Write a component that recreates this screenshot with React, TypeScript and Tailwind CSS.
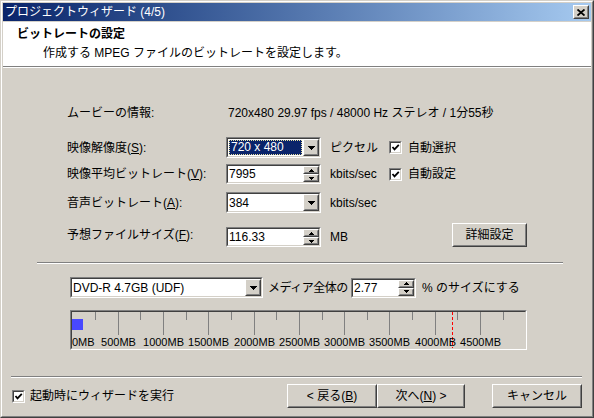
import React from 'react'

type Kids = { className?: string; children?: React.ReactNode }

// classic 3D borders
function Sunken({ className = '', inner = 'bg-white', children }: Kids & { inner?: string }) {
  return (
    <div className={`border border-t-[#808080] border-l-[#808080] border-b-white border-r-white ${className}`}>
      <div className={`h-full w-full border border-t-[#404040] border-l-[#404040] border-b-[#d4d0c8] border-r-[#d4d0c8] ${inner}`}>
        {children}
      </div>
    </div>
  )
}

function Raised({ className = '', children }: Kids) {
  return (
    <div className={`border border-t-white border-l-white border-b-[#404040] border-r-[#404040] bg-[#d4d0c8] ${className}`}>
      <div className="h-full w-full border border-t-[#d4d0c8] border-l-[#d4d0c8] border-b-[#808080] border-r-[#808080] flex items-center justify-center">
        {children}
      </div>
    </div>
  )
}

function Down({ w = 7 }: { w?: number }) {
  const h = Math.ceil(w / 2)
  return (
    <svg width={w} height={h} viewBox={`0 0 ${w} ${h}`} shapeRendering="crispEdges">
      <polygon points={`0,0 ${w},0 ${w / 2},${h}`} fill="#000" />
    </svg>
  )
}

function Up({ w = 5 }: { w?: number }) {
  const h = Math.ceil(w / 2)
  return (
    <svg width={w} height={h} viewBox={`0 0 ${w} ${h}`} shapeRendering="crispEdges">
      <polygon points={`0,${h} ${w},${h} ${w / 2},0`} fill="#000" />
    </svg>
  )
}

function Combo({ w, text, selected = false }: { w: string; text: string; selected?: boolean }) {
  return (
    <Sunken className={`${w} h-[21px] shrink-0`} inner="bg-white flex">
      <div className="flex-1 flex items-center pl-[1px] pr-[1px]">
        {selected ? (
          <span className="flex-1 h-[15px] flex items-center bg-[#0a246a] text-white border border-dotted border-[#e8e0a0] pl-[1px] leading-[13px]">
            {text}
          </span>
        ) : (
          <span className="leading-[14px]">{text}</span>
        )}
      </div>
      <Raised className="w-[16px] h-full">
        <Down />
      </Raised>
    </Sunken>
  )
}

function Spin({ w, text }: { w: string; text: string }) {
  return (
    <Sunken className={`${w} h-[20px] shrink-0`} inner="bg-white flex">
      <div className="flex-1 flex items-center pl-[1px] leading-[14px]">{text}</div>
      <div className="w-[16px] h-full flex flex-col">
        <Raised className="flex-1">
          <Up />
        </Raised>
        <Raised className="flex-1">
          <Down w={5} />
        </Raised>
      </div>
    </Sunken>
  )
}

function Check({ checked = true }: { checked?: boolean }) {
  return (
    <Sunken className="w-[13px] h-[13px] shrink-0" inner="bg-white flex items-center justify-center">
      {checked && (
        <svg width="9" height="9" viewBox="0 0 9 9">
          <polyline points="1.5,4 3.5,6.3 7.8,1.8" fill="none" stroke="#000" strokeWidth="1.8" />
        </svg>
      )}
    </Sunken>
  )
}

function Button({ w, children }: { w: string; children: React.ReactNode }) {
  return (
    <Raised className={`${w} h-[24px]`}>
      <span className="leading-[14px]">{children}</span>
    </Raised>
  )
}

function Row({ label, children, className = '' }: { label: React.ReactNode; children: React.ReactNode; className?: string }) {
  return (
    <div className={`flex ${className}`}>
      <div className="w-[159px] self-center leading-[14px]">{label}</div>
      {children}
    </div>
  )
}

const step = 22.65
const ticks = Array.from({ length: 19 }, (_, i) => i + 1)
const sizes = [500, 1000, 1500, 2000, 2500, 3000, 3500, 4000, 4500]

function Ruler() {
  return (
    <Sunken className="w-[457px] h-[40px] ml-[67px]" inner="bg-[#d4d0c8] relative text-[11px]">
      <svg className="absolute inset-0" width="453" height="36" shapeRendering="crispEdges">
        {ticks.map(k => {
          const x = Math.round(0.4 + step * k) + 0.5
          return (
            <line key={k} x1={x} y1={0} x2={x} y2={k % 2 ? 8 : 23} stroke="#808080" strokeWidth="1" />
          )
        })}
        <rect x="0" y="7" width="11" height="11" fill="#4848ff" />
        <line x1="380.5" y1="0" x2="380.5" y2="36" stroke="#ff0000" strokeWidth="1" strokeDasharray="3 2" />
      </svg>
      <span className="absolute left-0 top-[23px] leading-[14px]">0MB</span>
      {sizes.map((s, i) => (
        <span
          key={s}
          className="absolute top-[23px] leading-[14px] -translate-x-1/2"
          style={{ left: Math.round(0.4 + step * 2 * (i + 1)) + 0.5 }}
        >
          {s}MB
        </span>
      ))}
    </Sunken>
  )
}

export default function App() {
  return (
    <div className="w-[594px] h-[418px] text-[12px] text-black font-['Liberation_Sans','Noto_Sans_CJK_JP',sans-serif]">
      <div className="h-full border border-t-[#d4d0c8] border-l-[#d4d0c8] border-b-[#404040] border-r-[#404040] bg-[#d4d0c8]">
        <div className="h-full border border-t-white border-l-white border-b-[#808080] border-r-[#808080] p-[1px] flex flex-col">
          {/* title bar */}
          <div className="h-[18px] shrink-0 bg-linear-to-r from-[#0a246a] to-[#a6caf0] flex items-center pl-[2px] pr-[2px]">
            <span className="text-white leading-[14px] flex-1">プロジェクトウィザード (4/5)</span>
            <Raised className="w-[16px] h-[14px]">
              <svg width="8" height="7" viewBox="0 0 8 7">
                <path d="M0.5 0.5 L7.5 6.5 M7.5 0.5 L0.5 6.5" stroke="#000" strokeWidth="1.8" />
              </svg>
            </Raised>
          </div>

          {/* header */}
          <div className="mt-[1px] h-[44px] shrink-0 bg-white flex flex-col pl-[14px]">
            <div className="mt-[5px] font-bold leading-[14px]">ビットレートの設定</div>
            <div className="mt-[5px] ml-[26px] leading-[14px]">作成する MPEG ファイルのビットレートを設定します。</div>
          </div>
          <div className="h-[1px] bg-[#808080] shrink-0" />
          <div className="h-[1px] bg-white shrink-0" />

          {/* body */}
          <div className="flex-1 flex flex-col">
            <div className="ml-[64px] flex flex-col">
              <Row label="ムービーの情報:" className="mt-[35px] h-[20px]">
                <span className="self-center pl-[2px] leading-[14px]">720x480 29.97 fps / 48000 Hz ステレオ / 1分55秒</span>
              </Row>
              <Row label={<>映像解像度(<u>S</u>):</>} className="mt-[14px] items-center">
                <Combo w="w-[95px]" text="720 x 480" selected />
                <span className="ml-[9px] w-[59px] leading-[14px]">ピクセル</span>
                <Check />
                <span className="ml-[6px] leading-[14px]">自動選択</span>
              </Row>
              <Row label={<>映像平均ビットレート(<u>V</u>):</>} className="mt-[6px] items-center">
                <Spin w="w-[95px]" text="7995" />
                <span className="ml-[9px] w-[59px] leading-[14px]">kbits/sec</span>
                <Check />
                <span className="ml-[6px] leading-[14px]">自動設定</span>
              </Row>
              <Row label={<>音声ビットレート(<u>A</u>):</>} className="mt-[8px] items-center">
                <Combo w="w-[95px]" text="384" />
                <span className="ml-[9px] leading-[14px]">kbits/sec</span>
              </Row>
              <Row label={<>予想ファイルサイズ(<u>F</u>):</>} className="mt-[10px] items-end h-[24px]">
                <Spin w="w-[95px]" text="116.33" />
                <span className="ml-[9px] w-[59px] self-center mt-[4px] leading-[14px]">MB</span>
                <div className="ml-[63px]">
                  <Button w="w-[75px]">詳細設定</Button>
                </div>
              </Row>
            </div>

            <div className="mt-[15px] ml-[34px] w-[526px] shrink-0">
              <div className="h-[1px] bg-[#808080]" />
              <div className="h-[1px] bg-white" />
            </div>

            <div className="mt-[13px] ml-[67px] flex items-center">
              <Combo w="w-[193px]" text="DVD-R 4.7GB (UDF)" />
              <span className="ml-[5px] w-[83px] shrink-0 whitespace-nowrap leading-[14px] tracking-[-0.5px]">メディア全体の</span>
              <Spin w="w-[65px]" text="2.77" />
              <span className="ml-[6px] leading-[14px]">% のサイズにする</span>
            </div>

            <div className="mt-[12px]">
              <Ruler />
            </div>

            <div className="mt-auto ml-[8px] w-[571px]">
              <div className="h-[1px] bg-[#808080]" />
              <div className="h-[1px] bg-white" />
            </div>

            <div className="mt-[6px] mb-[7px] flex items-center">
              <div className="ml-[9px]">
                <Check />
              </div>
              <span className="ml-[5px] leading-[14px] flex-1">起動時にウィザードを実行</span>
              <Button w="w-[90px]">&lt; 戻る(<u>B</u>)</Button>
              <Button w="w-[88px]">次へ(<u>N</u>) &gt;</Button>
              <div className="ml-[27px] mr-[9px]">
                <Button w="w-[90px]">キャンセル</Button>
              </div>
            </div>
          </div>
        </div>
      </div>
    </div>
  )
}
